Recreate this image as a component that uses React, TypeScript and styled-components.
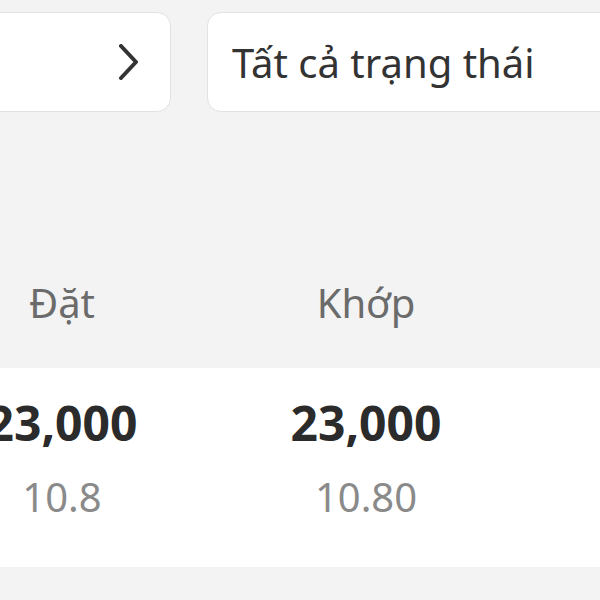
import React from "react";
import styled, { createGlobalStyle } from "styled-components";

const Global = createGlobalStyle`
  html, body { margin: 0; padding: 0; background: #f3f3f3; }
  body { font-family: "Noto Sans", "Open Sans", sans-serif; }
`;

const Page = styled.div`
  width: 600px;
  height: 600px;
  overflow: hidden;
  background: #f3f3f3;
  display: flex;
  flex-direction: column;
`;

const FilterRow = styled.div`
  display: grid;
  grid-template-columns: 261px 480px;
  column-gap: 36px;
  margin: 12px 0 0 -90px;
  width: 777px;
`;

const Select = styled.div<{ $align?: "start" | "end" }>`
  height: 98px;
  box-sizing: content-box;
  background: #ffffff;
  border: 1px solid #e2e2e2;
  border-radius: 14px;
  display: flex;
  align-items: center;
  justify-content: ${(p) => (p.$align === "end" ? "flex-end" : "flex-start")};
  padding: 0 24px;
  font-size: 40px;
  color: #333333;
`;

const Chevron = styled.svg`
  width: 24px;
  height: 36px;
  margin-right: 6px;
`;

const Columns = styled.div`
  display: grid;
  grid-template-columns: 304px 304px;
  margin-left: -90px;
`;

const HeaderRow = styled(Columns)`
  height: 256px;
  box-sizing: border-box;
  padding-bottom: 38px;
  align-items: end;
`;

const HeaderCell = styled.div`
  text-align: center;
  font-size: 40px;
  line-height: 54px;
  color: #6b6b6b;
`;

const DataRow = styled.div`
  background: #ffffff;
  height: 199px;
`;

const DataCell = styled.div`
  display: flex;
  flex-direction: column;
  align-items: center;
  padding-top: 23px;
`;

const Amount = styled.div`
  font-size: 48px;
  font-weight: 700;
  color: #2b2b2b;
  line-height: 64px;
`;

const Price = styled.div`
  font-size: 40px;
  color: #8a8a8a;
  line-height: 54px;
  margin-top: 15px;
`;

export default function App() {
  return (
    <Page>
      <Global />
      <FilterRow>
        <Select $align="end">
          <Chevron viewBox="0 0 24 36" fill="none">
            <path d="M5 2 L20 18 L5 34" stroke="#333" strokeWidth="4" strokeLinecap="round" strokeLinejoin="round" />
          </Chevron>
        </Select>
        <Select>Tất cả trạng thái</Select>
      </FilterRow>
      <HeaderRow>
        <HeaderCell>Đặt</HeaderCell>
        <HeaderCell>Khớp</HeaderCell>
      </HeaderRow>
      <DataRow>
        <Columns>
          <DataCell>
            <Amount>23,000</Amount>
            <Price>10.8</Price>
          </DataCell>
          <DataCell>
            <Amount>23,000</Amount>
            <Price>10.80</Price>
          </DataCell>
        </Columns>
      </DataRow>
    </Page>
  );
}
